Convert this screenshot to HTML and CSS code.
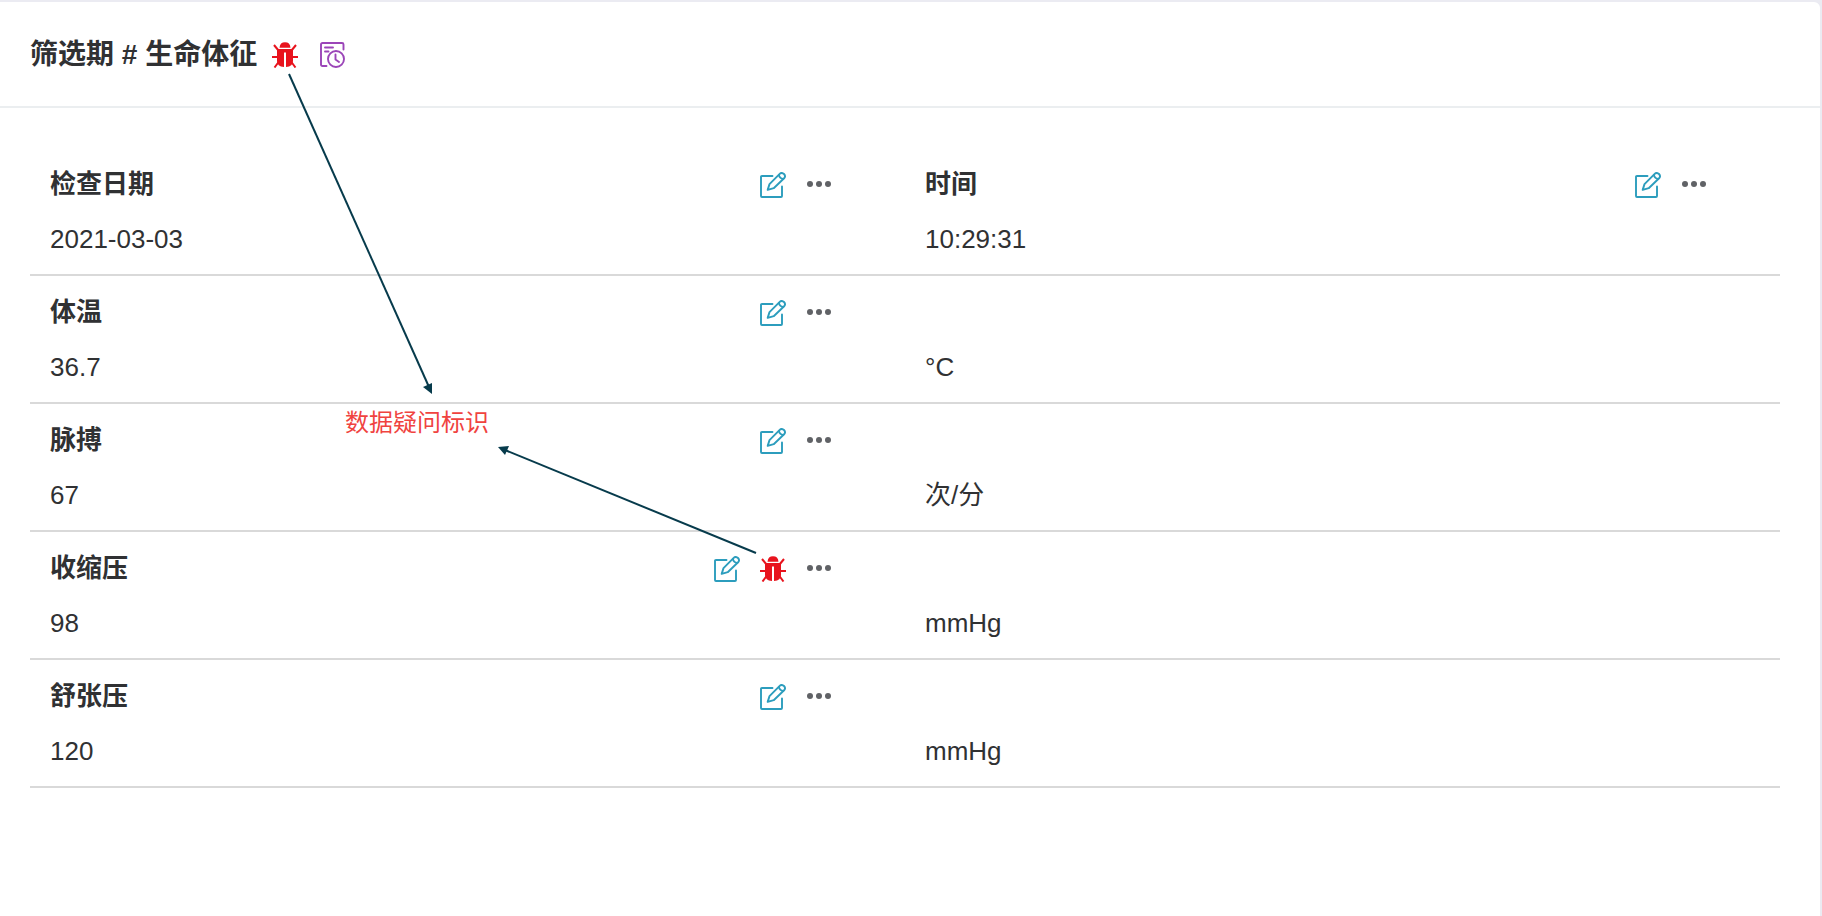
FILE: index.html
```html
<!DOCTYPE html>
<html lang="zh-CN">
<head>
    <meta charset="utf-8">
    <title>筛选期 # 生命体征</title>
    <link rel="stylesheet" href="styles.css">
</head>
<body>
<!-- 图标 -->
<svg class="symbols" aria-hidden="true">
    <symbol id="icon-edit" viewBox="0 0 26 26">
        <g fill="none" stroke="currentColor" stroke-width="1.9" stroke-linecap="round" stroke-linejoin="round">
            <path d="M12.500 4H2Q1 4 1 5V24Q1 25 2 25H21Q22 25 22 24V14.500"/>
            <path d="M7.700 17.900L9.500 12.100L19.700 1.900Q21.700 0 24 2Q26 4.200 24.100 6.300L13.700 16.200Z"/>
            <path d="M18.900 2.900Q19.500 6.500 23.200 7"/>
        </g>
    </symbol>
    <symbol id="icon-bug" viewBox="0 0 26 26">
        <path fill="currentColor" d="M7.500 5.700Q8 .3 13 .3T18.500 5.700Z"/>
        <path fill="currentColor" d="M5 7H21V19Q21 24.500 14 25V10.500H12V25Q5 24.500 5 19Z"/>
        <path fill="none" stroke="currentColor" stroke-width="2" d="M2 3L6.500 8.500M24 3L19.500 8.500M0 15H6M26 15H20M2.500 25.500L7 19.500M23.500 25.500L19 19.500"/>
    </symbol>
    <symbol id="icon-history" viewBox="0 0 26 26">
        <g fill="none" stroke="currentColor" stroke-width="1.900" stroke-linecap="round" stroke-linejoin="round">
            <path d="M6.500 24H2.500Q1 24 1 22.500V2.500Q1 1 2.500 1H22Q23.500 1 23.500 2.500V7.500"/>
            <path d="M5 5.500H13M5 9.500H8.500"/>
            <circle cx="16" cy="17" r="8"/>
            <path d="M15.500 12.500V17.500L19 20"/>
        </g>
    </symbol>
    <symbol id="icon-more" viewBox="0 0 26 26">
        <g fill="currentColor">
            <circle cx="4" cy="12" r="3"/>
            <circle cx="13" cy="12" r="3"/>
            <circle cx="22" cy="12" r="3"/>
        </g>
    </symbol>
</svg>

<div class="card">
    <div class="card-header">
        <h1 class="card-title">筛选期 # 生命体征</h1>
        <button type="button" class="icon-btn bug" aria-label="数据疑问"><svg><use href="#icon-bug"/></svg></button>
        <button type="button" class="icon-btn history" aria-label="历史"><svg><use href="#icon-history"/></svg></button>
    </div>
    <div class="card-body">
        <div class="row">
            <div class="item">
                <div class="item-head">
                    <span class="label">检查日期</span>
                    <button type="button" class="icon-btn edit" aria-label="编辑"><svg><use href="#icon-edit"/></svg></button>
                    <button type="button" class="icon-btn more" aria-label="更多"><svg><use href="#icon-more"/></svg></button>
                </div>
                <div class="value">2021-03-03</div>
            </div>
            <div class="item">
                <div class="item-head">
                    <span class="label">时间</span>
                    <button type="button" class="icon-btn edit" aria-label="编辑"><svg><use href="#icon-edit"/></svg></button>
                    <button type="button" class="icon-btn more" aria-label="更多"><svg><use href="#icon-more"/></svg></button>
                </div>
                <div class="value">10:29:31</div>
            </div>
        </div>
        <div class="row">
            <div class="item">
                <div class="item-head">
                    <span class="label">体温</span>
                    <button type="button" class="icon-btn edit" aria-label="编辑"><svg><use href="#icon-edit"/></svg></button>
                    <button type="button" class="icon-btn more" aria-label="更多"><svg><use href="#icon-more"/></svg></button>
                </div>
                <div class="value">36.7</div>
            </div>
            <div class="item unit">
                <div class="value">°C</div>
            </div>
        </div>
        <div class="row">
            <div class="item">
                <div class="item-head">
                    <span class="label">脉搏</span>
                    <button type="button" class="icon-btn edit" aria-label="编辑"><svg><use href="#icon-edit"/></svg></button>
                    <button type="button" class="icon-btn more" aria-label="更多"><svg><use href="#icon-more"/></svg></button>
                </div>
                <div class="value">67</div>
            </div>
            <div class="item unit">
                <div class="value">次/分</div>
            </div>
        </div>
        <div class="row">
            <div class="item">
                <div class="item-head">
                    <span class="label">收缩压</span>
                    <button type="button" class="icon-btn edit" aria-label="编辑"><svg><use href="#icon-edit"/></svg></button>
                    <button type="button" class="icon-btn bug" aria-label="数据疑问"><svg><use href="#icon-bug"/></svg></button>
                    <button type="button" class="icon-btn more" aria-label="更多"><svg><use href="#icon-more"/></svg></button>
                </div>
                <div class="value">98</div>
            </div>
            <div class="item unit">
                <div class="value">mmHg</div>
            </div>
        </div>
        <div class="row">
            <div class="item">
                <div class="item-head">
                    <span class="label">舒张压</span>
                    <button type="button" class="icon-btn edit" aria-label="编辑"><svg><use href="#icon-edit"/></svg></button>
                    <button type="button" class="icon-btn more" aria-label="更多"><svg><use href="#icon-more"/></svg></button>
                </div>
                <div class="value">120</div>
            </div>
            <div class="item unit">
                <div class="value">mmHg</div>
            </div>
        </div>
    </div>
</div>

<!-- 标注 -->
<svg class="arrows" width="800" height="600" aria-hidden="true">
    <g stroke="#073b4c" stroke-width="2">
        <path d="M289 74L429 387"/>
        <path d="M756 553L505 450"/>
    </g>
    <g fill="#073b4c">
        <path d="M432 394L423 387L432 383Z"/>
        <path d="M498 447L509 446L505 455Z"/>
    </g>
</svg>
<div class="note">数据疑问标识</div>
</body>
</html>
```

FILE: styles.css
```css
* {
    box-sizing: border-box;
}

body {
    margin: 0;
    background: #ebebf2;
    color: #303133;
    font-family: "Liberation Sans", "Noto Sans CJK SC", sans-serif;
    font-size: 26px;
    line-height: 36px;
}

.symbols {
    display: none;
}

.card {
    min-height: 100vh;
    border-top: 2px solid #ebebf2;
    border-right: 2px solid #ebebf2;
    border-radius: 0 8px 0 0;
    background: #fff;
}

.card-header {
    display: flex;
    align-items: center;
    padding: 35px 30px 33px;
    border-bottom: 2px solid #ebeef0;
}

.card-title {
    margin: 0 15px 0 0;
    font-size: 28px;
    font-weight: 600;
    line-height: 36px;
}

.card-header .history {
    margin-left: 22px;
}

.card-body {
    padding: 40px;
    padding-left: 30px;
}

.row {
    display: flex;
    border-bottom: 2px solid #d9d9d9;
}

.item {
    flex: 1;
    padding: 18px 73px 17px 20px;
}

.item-head {
    display: flex;
    align-items: center;
    margin-bottom: 19px;
}

.label {
    flex: 1;
    font-weight: 600;
}

.unit {
    padding-top: 73px;
}

.icon-btn {
    width: 26px;
    padding: 0;
    border: 0;
    background: none;
    cursor: pointer;
}

.icon-btn svg {
    display: block;
    width: 26px;
    height: 26px;
}

.item-head .icon-btn {
    margin-left: 20px;
    padding-top: 2px;
}

.edit {
    color: #2c9dbd;
}

.bug {
    color: #e8131d;
}

.history {
    color: #9b45b8;
}

.more {
    color: #606266;
}

/* 浮在表单上的标注 */
.arrows {
    position: absolute;
    top: 0;
    left: 0;
    pointer-events: none;
}

.note {
    position: absolute;
    top: 405px;
    left: 345px;
    color: #f0433f;
    font-size: 24px;
}
```
